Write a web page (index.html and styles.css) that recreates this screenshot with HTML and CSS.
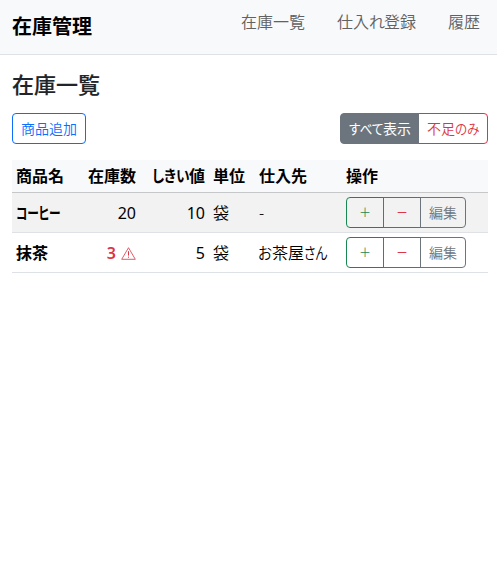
FILE: index.html
```html
<!DOCTYPE html>
<html lang="ja">
<head>
    <meta charset="UTF-8">
    <meta name="viewport" content="width=device-width, initial-scale=1.0">
    <title>在庫管理</title>
    <link rel="stylesheet" href="styles.css">
</head>
<body>
    <header class="navbar">
        <a class="brand" href="#">在庫管理</a>
        <nav class="nav">
            <a href="#">在庫一覧</a>
            <a href="#">仕入<span class="kana-re">れ</span>登録</a>
            <a href="#">履歴</a>
        </nav>
    </header>

    <main class="container">
        <h1>在庫一覧</h1>
        <div class="toolbar">
            <button class="btn btn-primary">商品追加</button>
            <div class="btn-group">
                <button class="btn btn-all active"><span class="kana kana-all">すべて</span>表示</button>
                <button class="btn btn-low">不足<span class="kana kana-low">のみ</span></button>
            </div>
        </div>

        <table class="table">
            <colgroup>
                <col class="col-name">
                <col class="col-stock">
                <col class="col-limit">
                <col class="col-unit">
                <col class="col-vendor">
                <col>
            </colgroup>
            <thead>
                <tr>
                    <th>商品名</th>
                    <th class="num">在庫数</th>
                    <th class="num"><span class="kana kana-limit">しきい</span>値</th>
                    <th>単位</th>
                    <th>仕入先</th>
                    <th>操作</th>
                </tr>
            </thead>
            <tbody>
                <tr class="striped">
                    <td class="name"><span class="kana kana-coffee">コーヒー</span></td>
                    <td class="num">20</td>
                    <td class="num">10</td>
                    <td>袋</td>
                    <td>-</td>
                    <td>
                        <div class="btn-group">
                            <button class="btn btn-plus">＋</button>
                            <button class="btn btn-minus">－</button>
                            <button class="btn btn-edit">編集</button>
                        </div>
                    </td>
                </tr>
                <tr>
                    <td class="name">抹茶</td>
                    <td class="num low"><b>3</b>
                        <svg class="warn" width="15" height="13" viewBox="0 0 15 13" fill="none" stroke="currentColor">
                            <path d="M7.5 0.7 L14.3 12.3 H0.7 Z" stroke-width="0.8"/>
                            <path d="M7.5 4.2 V8.6 M7.5 9.6 V10.7" stroke-width="1"/>
                        </svg>
                    </td>
                    <td class="num">5</td>
                    <td>袋</td>
                    <td class="vendor"><span class="kana kana-o">お</span>茶屋<span class="kana kana-san">さん</span></td>
                    <td>
                        <div class="btn-group">
                            <button class="btn btn-plus">＋</button>
                            <button class="btn btn-minus">－</button>
                            <button class="btn btn-edit">編集</button>
                        </div>
                    </td>
                </tr>
            </tbody>
        </table>
    </main>
</body>
</html>
```
FILE: styles.css
```css
* { box-sizing: border-box; }
body {
    margin: 0;
    font-family: "Noto Sans", "Noto Sans CJK JP", sans-serif;
    font-size: 16px;
    line-height: 24px;
    color: #212529;
    background: #fff;
}
a { text-decoration: none; }

.navbar {
    display: flex;
    justify-content: space-between;
    align-items: flex-start;
    height: 55px;
    padding: 10px 17px 0 12px;
    background: #f8f9fa;
    border-bottom: 1px solid #dee2e6;
}
.brand { padding-top: 1px; font-size: 20px; line-height: 32px; font-weight: 600; color: #000; }
.nav { display: flex; gap: 32px; }
.nav a { font-weight: 350; color: #606162; white-space: nowrap; }
.kana-re { letter-spacing: -1px; }

.container { padding: 0 9px 0 12px; }
h1 { margin: 16px 0 16px; font-size: 22px; line-height: 26px; font-weight: 500; -webkit-text-stroke: 0.15px; }
.toolbar { display: flex; justify-content: space-between; margin-bottom: 16px; }

.btn {
    height: 31px;
    padding: 0 8px;
    border: 1px solid;
    border-radius: 4px;
    background: transparent;
    font-family: inherit;
    font-size: 14px;
    line-height: 21px;
    font-weight: 350;
    text-align: left;
    white-space: nowrap;
    cursor: pointer;
}
.btn-group { display: flex; }
.btn-group .btn + .btn { margin-left: -1px; border-top-left-radius: 0; border-bottom-left-radius: 0; }
.btn-group .btn:not(:last-child) { border-top-right-radius: 0; border-bottom-right-radius: 0; }
.btn-primary { width: 74px; color: #0d6efd; border-color: #0d6efd; }
.btn-all { width: 79px; color: #6c757d; border-color: #6c757d; }
.btn-all.active { position: relative; z-index: 1; color: #fff; background: #6c757d; font-weight: 400; }
.btn-low { width: 70px; color: #dc3545; border-color: #dc3545; }
.btn-plus, .btn-minus { width: 38px; padding: 0; font-size: 12px; font-weight: 350; text-align: center; }
.btn-plus { color: #198754; border-color: #198754; }
.btn-minus { color: #dc3545; border-color: #dc3545; font-weight: 500; }
.btn-edit { width: 46px; color: #6c757d; border-color: #6c757d; }

/* narrow kana */
.kana {
    display: inline-block;
    font-feature-settings: "palt";
    text-align: left;
    transform-origin: 0 50%;
}
.kana-all { width: 34px; transform: scaleX(0.9); }
.kana-low { width: 24px; transform: scaleX(0.9); }
.kana-limit { width: 37px; transform: scaleX(0.86); }
.kana-coffee { width: 44px; transform: scaleX(0.73); }
.kana-o { width: 14px; transform: scaleX(0.9); }
.kana-san { width: 24px; transform: scaleX(0.8); }

.table {
    width: 476px;
    table-layout: fixed;
    border-collapse: separate;
    border-spacing: 0;
    color: #000;
}
.col-name { width: 72px; }
.col-stock { width: 56px; }
.col-limit { width: 69px; }
.col-unit { width: 46px; }
.col-vendor { width: 87px; }
.table th, .table td {
    padding: 4px;
    text-align: left;
    vertical-align: middle;
    white-space: nowrap;
    border-bottom: 1px solid #dee2e6;
}
.table th { height: 33px; font-weight: 600; background: #f8f9fa; border-bottom-color: #c6c7c8; }
.table td { height: 40px; font-weight: 350; }
.table .num { text-align: right; }
.table td.num { font-weight: 400; }
.striped td { background: #f2f2f2; }
.table .name { font-weight: 600; }
.table .vendor { padding-left: 3px; }
.table .low { color: #dc3545; word-spacing: 1px; }
.low b { font-weight: 600; }
.warn { vertical-align: -1px; }
```
